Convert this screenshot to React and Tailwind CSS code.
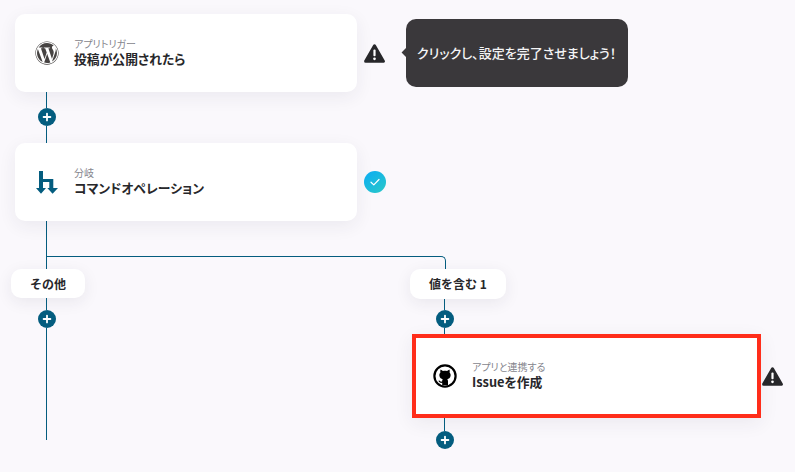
import React from 'react';
import { FaWordpress } from 'react-icons/fa';

const font = { fontFamily: '"Noto Sans CJK JP", "Noto Sans", sans-serif' };

const WarnIcon = () => (
  <svg width="21" height="19" viewBox="0 0 21 19" className="shrink-0">
    <polygon points="10.5,1.7 19.4,17.3 1.6,17.3" fill="#27272a" stroke="#27272a" strokeWidth="3" strokeLinejoin="round" />
    <rect x="9.4" y="5.6" width="2.2" height="6.6" rx="1" fill="#fff" />
    <circle cx="10.5" cy="14.8" r="1.35" fill="#fff" />
  </svg>
);

const CheckIcon = () => (
  <svg width="22" height="22" viewBox="0 0 22 22" className="shrink-0">
    <defs>
      <linearGradient id="chk" x1="0.2" y1="0.1" x2="0.85" y2="0.9">
        <stop offset="0" stopColor="#0fb0ee" />
        <stop offset="1" stopColor="#27c5cc" />
      </linearGradient>
    </defs>
    <circle cx="11" cy="11" r="11" fill="url(#chk)" />
    <path d="M7 11.2l2.8 2.7 5.2-5.4" fill="none" stroke="#fff" strokeWidth="1.2" strokeLinecap="round" strokeLinejoin="round" />
  </svg>
);

const BranchIcon = () => (
  <svg width="22" height="23" viewBox="0 0 22 23" className="shrink-0">
    <path d="M3 0H7V8H17.3V17H22L16.6 22.8L11.3 17H13.3V11H7V17H10L5 22.8L0 17H3Z" fill="#045d7f" />
  </svg>
);

const GithubIcon = () => (
  <svg width="24" height="24" viewBox="0 0 24 24" className="shrink-0">
    <circle cx="12" cy="12" r="10.6" fill="#fff" stroke="#000" strokeWidth="2.2" />
    <path d="M7.6 5.6L10 7C11.3 6.7 12.7 6.7 14 7L16.4 5.6C16.8 6.6 16.9 7.6 16.6 8.4C17.4 9.3 17.8 10.4 17.6 11.7C17.3 13.8 15.7 14.9 14.3 15.2C14.8 15.7 15 16.4 15 17.2V21H9.2V18.8C7.4 19.2 6.2 18.4 5.4 16.8L6.4 16.6C7 17.5 7.9 17.9 9.1 17.5C9.1 16.4 9.3 15.7 9.7 15.2C8.3 14.9 6.7 13.8 6.4 11.7C6.2 10.4 6.6 9.3 7.4 8.4C7.1 7.6 7.2 6.6 7.6 5.6Z" fill="#000" />
  </svg>
);

const PlusButton = ({ className }) => (
  <div className={`w-[18px] h-[18px] rounded-full bg-[#045d7f] flex items-center justify-center shrink-0 ${className}`}>
    <svg width="10" height="10" viewBox="0 0 10 10">
      <path d="M5 1.6V8.4M1.6 5H8.4" stroke="#fff" strokeWidth="1.8" strokeLinecap="round" />
    </svg>
  </div>
);

const StepText = ({ label, title }) => (
  <div className="flex flex-col [font-feature-settings:'palt']">
    <span className="text-[10px] leading-[12px] text-[#85858d]">{label}</span>
    <span className="text-[12.8px] leading-[18px] font-bold text-[#27272a]">{title}</span>
  </div>
);

const Card = ({ icon, label, title }) => (
  <div className="w-[342px] h-[78px] bg-white rounded-[10px] shadow-[0_5px_18px_rgba(40,40,70,0.07)] flex items-center pl-[20px] gap-[15px] shrink-0">
    <div className="w-[24px] flex justify-center">{icon}</div>
    <StepText label={label} title={title} />
  </div>
);

const BranchLabel = ({ className, children }) => (
  <div className={`bg-white rounded-[10px] shadow-[0_4px_16px_rgba(40,40,70,0.08)] flex items-center justify-center text-[12px] font-bold text-[#27272a] ${className}`}>
    {children}
  </div>
);

const App = () => {
  return (
    <div className="w-[795px] h-[472px] overflow-hidden bg-[#faf8fc] pt-[14px] pl-[11px]" style={font}>
      {/* トリガー */}
      <div className="flex items-center ml-[4px]">
        <Card icon={<FaWordpress size={24} color="#464342" />} label="アプリトリガー" title="投稿が公開されたら" />
        <div className="ml-[7px]"><WarnIcon /></div>
        <div className="relative ml-[21px] w-[222px] h-[68px] bg-[#3a383b] rounded-[10px] flex items-center pl-[11px] text-[13px] text-[#f4f4f5] font-medium [font-feature-settings:'palt']">
          <div className="absolute left-[-3px] top-[30px] w-[7px] h-[7px] rotate-45 bg-[#3a383b]" />
          クリックし、設定を完了させましょう！
        </div>
      </div>

      {/* 接続線 */}
      <div className="flex flex-col h-[51px]">
        <div className="w-px h-[16px] bg-[#045d7f] ml-[35px]" />
        <PlusButton className="ml-[27px]" />
        <div className="w-px h-[17px] bg-[#045d7f] ml-[35px]" />
      </div>

      {/* 分岐 */}
      <div className="flex items-center ml-[4px]">
        <Card icon={<BranchIcon />} label="分岐" title="コマンドオペレーション" />
        <div className="ml-[7px]"><CheckIcon /></div>
      </div>
      <div className="w-px h-[35px] bg-[#045d7f] ml-[35px]" />
      <div className="w-[400px] h-[13px] ml-[35px] border-t border-l border-r border-[#045d7f] rounded-tr-[5px]" />

      <div className="flex">
        {/* その他 */}
        <div className="w-[399px] flex flex-col shrink-0">
          <BranchLabel className="w-[74px] h-[29px]">その他</BranchLabel>
          <div className="w-px h-[12px] bg-[#045d7f] ml-[35px]" />
          <PlusButton className="ml-[27px]" />
          <div className="w-px h-[112px] bg-[#045d7f] ml-[35px]" />
        </div>

        {/* 値を含む */}
        <div className="flex flex-col">
          <BranchLabel className="w-[96px] h-[30px]">値を含む 1</BranchLabel>
          <div className="w-px h-[11px] bg-[#045d7f] ml-[34px]" />
          <PlusButton className="ml-[26px]" />
          <div className="w-px h-[6px] bg-[#045d7f] ml-[34px]" />
          <div className="flex items-center ml-[2px]">
            <div className="w-[349px] h-[84px] bg-white border-[4px] border-[#ff2d1a] shadow-[0_5px_18px_rgba(40,40,70,0.07)] flex items-center pl-[17px] gap-[15px] shrink-0">
              <GithubIcon />
              <StepText label="アプリと連携する" title="Issueを作成" />
            </div>
            <div className="ml-[1px]"><WarnIcon /></div>
          </div>
          <div className="w-px h-[13px] bg-[#045d7f] ml-[34px]" />
          <PlusButton className="ml-[26px]" />
        </div>
      </div>
    </div>
  );
};

export default App;
